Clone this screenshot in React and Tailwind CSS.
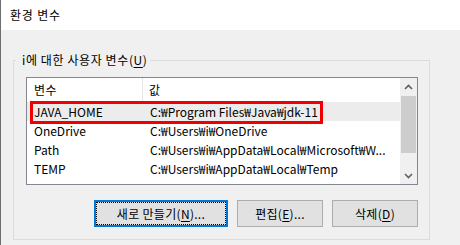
import React from "react";

function Chevron({ up }) {
  return (
    <svg width="9" height="6" viewBox="0 0 9 6" className="block">
      <path
        d={up ? "M1 5 L4.5 1.5 L8 5" : "M1 1 L4.5 4.5 L8 1"}
        fill="none"
        stroke="#606060"
        strokeWidth="1.6"
      />
    </svg>
  );
}

function U({ children }) {
  return <span className="underline underline-offset-[2px] decoration-1">{children}</span>;
}

const rows = [
  ["JAVA_HOME", "C:₩Program Files₩Java₩jdk-11", true],
  ["OneDrive", "C:₩Users₩i₩OneDrive", false],
  ["Path", "C:₩Users₩i₩AppData₩Local₩Microsoft₩W...", false],
  ["TEMP", "C:₩Users₩i₩AppData₩Local₩Temp", false],
];

export default function App() {
  return (
    <div className="w-[460px] h-[245px] overflow-hidden bg-[#f0f0f0] border-l border-[#6e6e6e] flex flex-col font-['Noto_Sans_CJK_KR','Noto_Sans',sans-serif] text-[12px] leading-[16px] text-black">
      <div className="h-[30px] shrink-0 bg-white flex items-center pl-[9px] tracking-[0.8px]">환경 변수</div>
      <div className="pl-[12px] pt-[22px]">
        <fieldset className="w-[417px] border border-[#dcdcdc] pl-[12px] pr-[11px] pt-[9px] pb-[12px] m-0">
          <legend className="-ml-[10px] pl-[6px] pr-[3px] leading-[16px] tracking-[0.6px]">
            i에 대한 사용자 변수(<U>U</U>)
          </legend>
          <div className="h-[108px] w-[392px] border border-[#828790] bg-white flex overflow-hidden">
            <div className="flex-1 flex flex-col overflow-hidden">
              <div className="h-[24px] shrink-0 flex">
                <div className="w-[116px] shrink-0 pl-[7px] border-r border-[#e5e5e5] flex items-center tracking-[0.5px]">변수</div>
                <div className="pl-[6px] flex items-center">값</div>
              </div>
              {rows.map(([n, v, sel]) => (
                <div
                  key={n}
                  className={`relative h-[19px] shrink-0 flex items-center ${sel ? "bg-[#ececec]" : ""}`}
                >
                  <div className="w-[117px] shrink-0 pl-[7px] whitespace-nowrap">{n}</div>
                  <div className="flex-1 min-w-0 pl-[6px] whitespace-nowrap">{v}</div>
                  {sel && (
                    <div className="absolute left-[3px] top-[-1px] w-[293px] h-[23px] border-[3px] border-[#f00000]" />
                  )}
                </div>
              ))}
            </div>
            <div className="w-[17px] shrink-0 bg-[#f0f0f0] flex flex-col">
              <div className="h-[17px] flex items-center justify-center">
                <Chevron up />
              </div>
              <div className="h-[57px] mx-[1px] mt-[1px] bg-[#cdcdcd]" />
              <div className="flex-1" />
              <div className="h-[17px] flex items-center justify-center">
                <Chevron />
              </div>
            </div>
          </div>
          <div className="mt-[15px] flex justify-end gap-[9px]">
            <div className="w-[134px] h-[27px] border-2 border-[#0078d7] bg-[#e1e1e1] flex">
              <div className="flex-1 border border-dotted border-black flex items-center justify-center tracking-[0.3px]">
                새로 만들기(<U>N</U>)...
              </div>
            </div>
            <div className="w-[86px] h-[27px] border border-[#adadad] bg-[#e1e1e1] flex items-center justify-center tracking-[0.3px]">
              편집(<U>E</U>)...
            </div>
            <div className="w-[86px] h-[27px] border border-[#adadad] bg-[#e1e1e1] flex items-center justify-center tracking-[0.3px]">
              삭제(<U>D</U>)
            </div>
          </div>
        </fieldset>
      </div>
    </div>
  );
}
